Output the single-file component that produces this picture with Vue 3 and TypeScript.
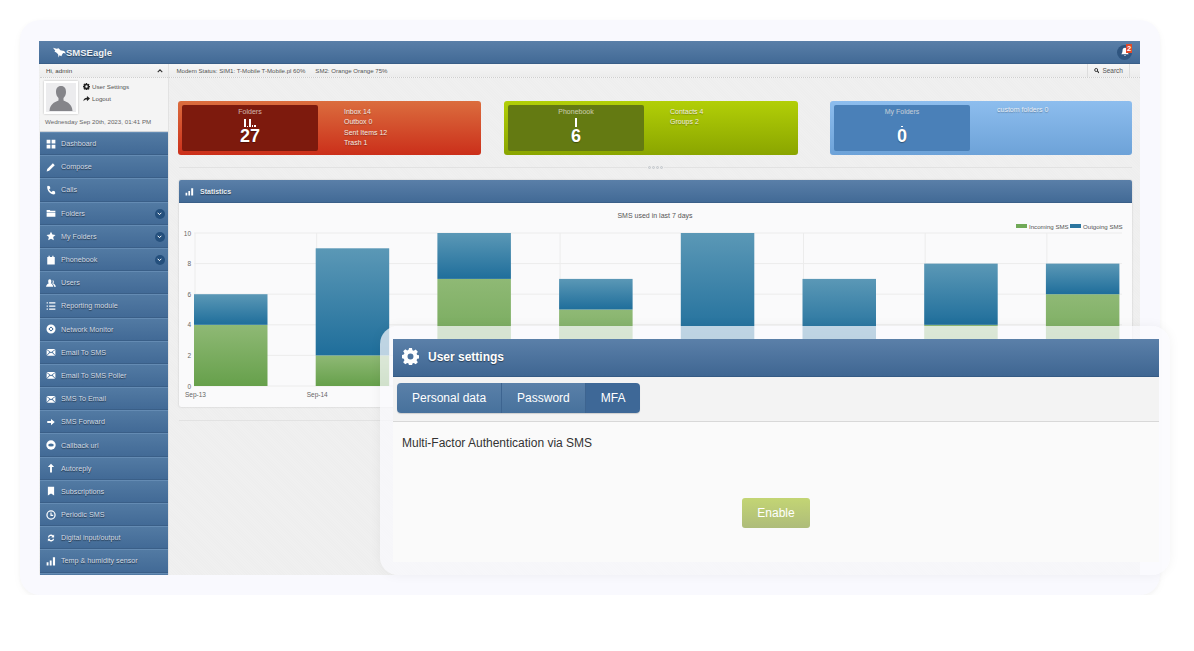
<template>
  <div class="frame">
    <div class="screen">
      <header class="topbar">
        <div class="brand">
          <svg class="eagle" viewBox="0 0 14 11" width="13" height="11">
            <path d="M0 .5 4 1.500 6 1 8 3l4 1 2 2.500-3-.5-1 1.500L9 9.500 7 8.500 6 11 5.500 7.500 3.500 5.500 1.500 4.500 2.500 3.500z" fill="#fff" />
          </svg>
          <span>SMSEagle</span>
        </div>
        <div class="bell">
          <svg viewBox="0 0 12 12" width="10" height="10">
            <path d="M6 1C4 1 3 2.600 3 4.500 3 7 2 8 1.500 8.800h9C10 8 9 7 9 4.500 9 2.600 8 1 6 1zM4.800 9.700a1.300 1.300 0 0 0 2.400 0z" fill="#fff" />
          </svg>
          <b>2</b>
        </div>
      </header>

      <div class="body">
        <aside class="sidebar">
          <div class="hello">
            <span>Hi, admin</span>
            <svg viewBox="0 0 8 5" width="6" height="4"><path d="M1 4 4 1l3 3" fill="none" stroke="#333" stroke-width="1.500" /></svg>
          </div>
          <div class="profile">
            <div class="profile-top">
              <div class="avatar">
                <svg viewBox="0 0 30 30" width="30" height="30">
                  <path d="M15 4c-3.500 0-5 2.500-5 6 0 2.500 1 4.500 2.500 6v2.500C8 20.500 4 22 3.500 29h23c-.5-7-4.500-8.500-9-10.500V16c1.500-1.500 2.500-3.500 2.500-6 0-3.500-1.500-6-5-6z" fill="#85858a" />
                </svg>
              </div>
              <ul class="links">
                <li>
                  <svg viewBox="0 0 16 16" width="7" height="7"><path fill="#222" fill-rule="evenodd" :d="gear" /></svg>
                  User Settings
                </li>
                <li>
                  <svg viewBox="0 0 16 16" width="7" height="7"><path d="M9 2l7 6-7 6v-4C5 10 3 11 1 14c0-5 3-8 8-8z" fill="#222" /></svg>
                  Logout
                </li>
              </ul>
            </div>
            <p class="date">Wednesday Sep 20th, 2023, 01:41 PM</p>
          </div>
          <nav class="menu">
            <div v-for="item in menu" :key="item.label" class="menu-row">
              <svg class="menu-icon" viewBox="0 0 16 16" width="10" height="10" v-html="icons[item.icon]"></svg>
              <span>{{ item.label }}</span>
              <i v-if="item.sub" class="chev">
                <svg viewBox="0 0 8 6" width="5" height="4"><path d="M1 1l3 3 3-3" fill="none" stroke="#fff" stroke-width="1.600" /></svg>
              </i>
            </div>
            <div class="menu-row"></div>
          </nav>
        </aside>

        <main class="main">
          <div class="status">
            <span class="modem">Modem Status: SIM1: T-Mobile T-Mobile.pl 60%</span>
            <span class="modem sim2">SM2: Orange Orange 75%</span>
            <div class="search">
              <svg viewBox="0 0 16 16" width="7" height="7">
                <circle cx="6.500" cy="6.500" r="4.500" fill="none" stroke="#222" stroke-width="2.600" />
                <path d="M10 10l5 5" stroke="#222" stroke-width="3" />
              </svg>
              <span>Search</span>
            </div>
          </div>

          <section class="stats">
            <div v-for="s in stats" :key="s.title" class="stat" :class="s.cls">
              <div class="stat-box">
                <div class="stat-title">{{ s.title }}</div>
                <div class="spark">
                  <i v-for="(h, n) in s.spark" :key="n" :style="{ height: h + 'px' }"></i>
                </div>
                <div class="stat-num">{{ s.value }}</div>
              </div>
              <ul class="stat-list">
                <li v-for="l in s.lines" :key="l">{{ l }}</li>
              </ul>
            </div>
          </section>

          <div class="divider"><span class="grip"><i></i><i></i><i></i><i></i></span></div>

          <section class="panel">
            <div class="panel-head">
              <svg viewBox="0 0 16 16" width="9" height="9" v-html="icons.bars"></svg>
              <span>Statistics</span>
            </div>
            <svg class="chart" viewBox="0 0 953 204" width="953" height="204">
              <defs>
                <linearGradient id="blueFill" x1="0" y1="0" x2="0" y2="1">
                  <stop offset="0" stop-color="#5b98b6" />
                  <stop offset="1" stop-color="#1f6e9b" />
                </linearGradient>
                <linearGradient id="greenFill" x1="0" y1="0" x2="0" y2="1">
                  <stop offset="0" stop-color="#8fb975" />
                  <stop offset="1" stop-color="#66a04b" />
                </linearGradient>
              </defs>
              <text class="chart-title" x="476" y="15" text-anchor="middle">SMS used in last 7 days</text>
              <rect x="837" y="21" width="11" height="4" fill="#70a957" />
              <text class="chart-legend" x="850" y="26">Incoming SMS</text>
              <rect x="891" y="21" width="11" height="4" fill="#2b759f" />
              <text class="chart-legend" x="904" y="26">Outgoing SMS</text>
              <g v-for="t in ticks" :key="t">
                <line x1="15" :x2="943" :y1="yOf(t)" :y2="yOf(t)" stroke="#ececec" />
                <text class="chart-tick" x="12" :y="yOf(t) + 2.500" text-anchor="end">{{ t }}</text>
              </g>
              <line v-for="(b, n) in bars" :key="'v' + n" :x1="xOf(n) + 1" :x2="xOf(n) + 1" y1="30" y2="183" stroke="#ececec" />
              <g v-for="(b, n) in bars" :key="n">
                <rect :x="xOf(n)" :y="yOf(b.inc)" width="73.500" :height="b.inc * unit" fill="url(#greenFill)" />
                <rect :x="xOf(n)" :y="yOf(b.inc + b.out)" width="73.500" :height="b.out * unit" fill="url(#blueFill)" />
              </g>
              <text v-for="(d, n) in days" :key="d" class="chart-tick" :x="xOf(n) - 9" y="194">{{ d }}</text>
            </svg>
          </section>

          <div class="divider plain"></div>
        </main>
      </div>
    </div>

    <div class="popover">
      <div class="settings">
        <div class="settings-head">
          <svg viewBox="0 0 16 16" width="17" height="17">
            <path fill="#fff" fill-rule="evenodd" :d="gear" />
          </svg>
          <span>User settings</span>
        </div>
        <div class="tabs-bar">
          <div class="tabs">
            <button v-for="t in tabs" :key="t" class="tab" :class="{ active: t === activeTab }" @click="activeTab = t">{{ t }}</button>
          </div>
        </div>
        <div class="settings-body">
          <p>Multi-Factor Authentication via SMS</p>
          <button class="enable">Enable</button>
        </div>
      </div>
    </div>
  </div>
</template>

<script setup lang="ts">
import { ref } from 'vue'

const gear = 'M6.600 0h2.800l.4 2.100 1.300.6L12.900 1.500l2 2-1.200 1.800.6 1.300 2.100.4v2.800l-2.100.4-.6 1.300 1.200 1.800-2 2-1.800-1.200-1.300.6-.4 2.100H6.600l-.4-2.100-1.300-.6-1.800 1.200-2-2 1.200-1.800-.6-1.300L-.4 9.400V6.600l2.100-.4.6-1.300L1.100 3.100l2-2 1.800 1.200 1.300-.6zM8 5.200a2.800 2.800 0 1 0 0 5.600 2.800 2.800 0 0 0 0-5.600z'

const icons: Record<string, string> = {
  grid: '<path fill="#fff" d="M1 1h6v6H1zM9 1h6v6H9zM1 9h6v6H1zM9 9h6v6H9z"/>',
  pencil: '<path fill="#fff" d="M11 2l3 3-9 9-4 1 1-4z"/>',
  phone: '<path fill="#fff" d="M3 1l3 1 1 3-2 2c1 2 2 3 4 4l2-2 3 1 1 3-2 2C7 15 1 9 2 2z"/>',
  folder: '<path fill="#fff" d="M1 3h5l1 1.500h8V7H1zM1 8h14v6H1z"/>',
  star: '<path fill="#fff" d="M8 1l2.200 4.700 5 .6-3.700 3.400 1 5L8 12.300l-4.500 2.400 1-5L.8 6.300l5-.6z"/>',
  calendar: '<path fill="#fff" d="M2 3h2V1h2v2h4V1h2v2h2v12H2z"/>',
  users: '<path fill="#fff" d="M6 2c1.800 0 2.600 1.300 2.600 3S8 8 7.500 8.500c1.600.6 3.500 1.500 4 5.500H0c.5-3 2.500-4.800 4.500-5.500C4 8 3.500 6.700 3.500 5S4.200 2 6 2zM10 3c1.600 0 2.400 1.200 2.400 2.800s-.6 2.300-1 2.800c1.700.6 3.800 1.600 4.600 5.400h-3c-.4-2.500-1.600-4.400-3-5.300.6-.9.9-2 .9-3.200 0-.9-.2-1.700-.5-2.400z"/>',
  list: '<path fill="#fff" d="M1 2h2v2H1zM5 2h10v2H5zM1 7h2v2H1zM5 7h10v2H5zM1 12h2v2H1zM5 12h10v2H5z"/>',
  ring: '<circle cx="8" cy="8" r="5.500" fill="none" stroke="#fff" stroke-width="3.500"/><path d="M5 5l6 6M11 5l-6 6" stroke="#fff" stroke-width="1.500"/>',
  mail: '<path fill="#fff" d="M1 3h14L8 8.500zM1 4.500V13l4.500-5zM15 4.500V13l-4.500-5zM6.500 9 8 10l1.500-1 5 5h-13z"/>',
  right: '<path fill="#fff" d="M2 6.500h6V3l6 5-6 5V9.500H2z"/>',
  eye: '<circle cx="8" cy="8" r="7.500" fill="#fff"/><ellipse cx="8" cy="8" rx="4.500" ry="2.500" fill="#46719b"/>',
  up: '<path fill="#fff" d="M8 1l5 5.500H9.500V15h-3V6.500H3z"/>',
  bookmark: '<path fill="#fff" d="M3 1h10v14l-5-3-5 3z"/>',
  clock: '<circle cx="8" cy="8" r="6.500" fill="none" stroke="#fff" stroke-width="2"/><path d="M8 4v4.500h3.500" fill="none" stroke="#fff" stroke-width="1.800"/>',
  sync: '<path fill="#fff" d="M3 7a5 5 0 0 1 8.500-3L13 2.500V7H8.500l1.500-1.500A3 3 0 0 0 5 7zM13 9a5 5 0 0 1-8.500 3L3 13.500V9h4.500L6 10.500A3 3 0 0 0 11 9z"/>',
  bars: '<path fill="#fff" d="M1 10h3v5H1zM6 7h3v8H6zM11 2h3.500v13H11z"/>',
}

const menu = [
  { label: 'Dashboard', icon: 'grid' },
  { label: 'Compose', icon: 'pencil' },
  { label: 'Calls', icon: 'phone' },
  { label: 'Folders', icon: 'folder', sub: true },
  { label: 'My Folders', icon: 'star', sub: true },
  { label: 'Phonebook', icon: 'calendar', sub: true },
  { label: 'Users', icon: 'users' },
  { label: 'Reporting module', icon: 'list' },
  { label: 'Network Monitor', icon: 'ring' },
  { label: 'Email To SMS', icon: 'mail' },
  { label: 'Email To SMS Poller', icon: 'mail' },
  { label: 'SMS To Email', icon: 'mail' },
  { label: 'SMS Forward', icon: 'right' },
  { label: 'Callback url', icon: 'eye' },
  { label: 'Autoreply', icon: 'up' },
  { label: 'Subscriptions', icon: 'bookmark' },
  { label: 'Periodic SMS', icon: 'clock' },
  { label: 'Digital input/output', icon: 'sync' },
  { label: 'Temp & humidity sensor', icon: 'bars' },
]

const stats = [
  { title: 'Folders', value: 27, cls: 'red', spark: [8, 1, 8, 2, 2], lines: ['Inbox 14', 'Outbox 0', 'Sent Items 12', 'Trash 1'] },
  { title: 'Phonebook', value: 6, cls: 'green', spark: [9], lines: ['Contacts 4', 'Groups 2'] },
  { title: 'My Folders', value: 0, cls: 'blue', spark: [1], lines: ['custom folders 0'] },
]

const bars = [
  { inc: 4, out: 2 },
  { inc: 2, out: 7 },
  { inc: 7, out: 3 },
  { inc: 5, out: 2 },
  { inc: 3, out: 7 },
  { inc: 3, out: 4 },
  { inc: 4, out: 4 },
  { inc: 6, out: 2 },
]

const days = ['Sep-13', 'Sep-14']
const ticks = [0, 2, 4, 6, 8, 10]
const unit = 15.3
const yOf = (v: number) => 183 - v * unit
const xOf = (n: number) => 15 + n * 121.7

const tabs = ['Personal data', 'Password', 'MFA']
const activeTab = ref('MFA')
</script>

<style>
html,
body {
  background: #fff;
}
</style>

<style scoped>
.frame {
  position: relative;
  box-sizing: border-box;
  width: 1140px;
  height: 575px;
  margin: 20px 0 0 20px;
  padding: 21px 20px 20px 19px;
  background: #f9f9fe;
  border-radius: 20px;
  box-shadow: 0 2px 4px rgba(0, 0, 0, 0.04), 0 3px 14px rgba(0, 0, 0, 0.02);
  font-family: "Liberation Sans", Arial, sans-serif;
}
.screen {
  display: flex;
  flex-direction: column;
  height: 534px;
  overflow: hidden;
  background-color: #eeeeee;
  background-image: repeating-linear-gradient(45deg, rgba(255, 255, 255, 0.14) 0 1px, transparent 1px 2px);
}
.topbar {
  display: flex;
  align-items: center;
  justify-content: space-between;
  flex: none;
  height: 23px;
  padding: 0 8px 0 14px;
  background: linear-gradient(#5a7fa8, #426a96);
  border-bottom: 1px solid #3a5f88;
  box-sizing: border-box;
}
.brand {
  display: flex;
  align-items: center;
  color: #eef2f6;
  font-size: 9.5px;
  font-weight: bold;
  text-shadow: 0 1px 1px rgba(0, 0, 0, 0.4);
}
.bell {
  position: relative;
  display: flex;
  align-items: center;
  justify-content: center;
  width: 15px;
  height: 15px;
  border-radius: 50%;
  background: #2f5580;
}
.bell b {
  position: absolute;
  top: -1px;
  right: 0;
  width: 6px;
  height: 9px;
  background: #e04a2a;
  color: #fff;
  font-size: 7.5px;
  line-height: 9px;
  text-align: center;
}
.body {
  display: flex;
  flex: 1;
  min-height: 0;
}
.sidebar {
  flex: none;
  width: 127.5px;
  margin-left: 1px;
  background: #f4f4f4;
}
.hello {
  display: flex;
  align-items: center;
  justify-content: space-between;
  height: 14px;
  padding: 0 5px 0 6px;
  box-sizing: border-box;
  border-bottom: 1px dotted #cfcfcf;
  background: linear-gradient(#f6f6f6, #ececec);
  font-size: 6.2px;
  color: #444;
}
.profile {
  height: 54px;
  box-sizing: border-box;
  padding: 3px 0 0 4px;
  border-bottom: 1px solid #cfd3d8;
}
.profile-top {
  display: flex;
}
.avatar {
  display: flex;
  align-items: flex-end;
  justify-content: center;
  width: 34px;
  height: 33px;
  box-sizing: border-box;
  border: 2px solid #fff;
  background: #ececee;
  box-shadow: 0 0 2px rgba(0, 0, 0, 0.25);
}
.links {
  margin: -1px 0 0 5px;
  padding: 0;
  list-style: none;
  font-size: 6.2px;
  color: #555;
}
.links li {
  display: flex;
  align-items: center;
  gap: 2px;
  height: 12px;
}
.date {
  margin: 4px 0 0 1px;
  font-size: 6.2px;
  color: #666;
  white-space: nowrap;
}
.menu-row {
  position: relative;
  display: flex;
  align-items: center;
  height: 23.2px;
  box-sizing: border-box;
  padding-left: 6px;
  background: linear-gradient(#527aa3, #426a96);
  border-top: 1px solid #648bb3;
  border-bottom: 1px solid #3a5f88;
  color: #d3dce6;
  font-size: 7.2px;
  text-shadow: 0 1px 1px rgba(0, 0, 0, 0.55);
}
.menu-icon {
  flex: none;
  margin-right: 5px;
}
.chev {
  position: absolute;
  right: 3px;
  top: 6px;
  display: flex;
  align-items: center;
  justify-content: center;
  width: 10px;
  height: 10px;
  border-radius: 50%;
  background: #25507d;
}
.main {
  flex: 1;
  min-width: 0;
  padding: 0 8px 0 9.5px;
  border-left: 1px solid #e2e2e2;
}
.status {
  display: flex;
  align-items: center;
  height: 14px;
  margin: 0 -8px 0 -9.5px;
  padding-left: 8px;
  background: linear-gradient(#f6f6f6, #ececec);
  border-bottom: 1px dotted #cfcfcf;
  box-sizing: border-box;
  font-size: 6.1px;
  color: #555;
}
.sim2 {
  margin-left: 10px;
}
.search {
  display: flex;
  align-items: center;
  gap: 3px;
  height: 100%;
  margin-left: auto;
  margin-right: 10px;
  padding: 0 6px;
  border-left: 1px solid #ddd;
  border-right: 1px solid #ddd;
  box-sizing: border-box;
  width: 43px;
  font-size: 6.5px;
}
.stats {
  display: flex;
  margin-top: 23px;
}
.stat {
  display: flex;
  height: 54px;
  box-sizing: border-box;
  padding: 4px;
  border-radius: 3px;
  color: #f3ece4;
}
.stat-box {
  display: flex;
  flex-direction: column;
  align-items: center;
  flex: none;
  width: 136px;
  padding-top: 1px;
  box-sizing: border-box;
  border-radius: 2px;
}
.stat-title {
  font-size: 7px;
  line-height: 9px;
  margin-top: 1px;
  opacity: 0.72;
}
.spark {
  display: flex;
  align-items: flex-end;
  gap: 1px;
  height: 9px;
  margin-top: 2px;
}
.spark i {
  display: block;
  width: 1.5px;
  background: #fff;
}
.stat-num {
  font-size: 18px;
  font-weight: bold;
  line-height: 17px;
  margin-top: 1px;
  color: #fff;
  text-shadow: 0 1px 1px rgba(0, 0, 0, 0.35);
}
.stat-list {
  margin: 2px 0 0 26px;
  padding: 0;
  list-style: none;
  font-size: 7px;
  line-height: 10.4px;
  text-shadow: 0 1px 1px rgba(0, 0, 0, 0.3);
}
.red {
  width: 303px;
  background: linear-gradient(#db6d3e, #cb2f1a);
}
.red .stat-box {
  background: #7d1a0d;
}
.green {
  width: 294px;
  margin-left: 23px;
  background: linear-gradient(#b2cf07, #8aa500);
}
.green .stat-box {
  background: #647a12;
}
.blue {
  width: 302px;
  margin-left: 32px;
  background: linear-gradient(#8dbdee, #6da2d8);
}
.blue .stat-box {
  background: #4a80b8;
}
.blue .stat-list {
  margin: 0 0 0 27px;
  color: #e8eef5;
}
.divider {
  position: relative;
  height: 1px;
  margin: 12px 0 0 1px;
  background: #e2e2e2;
}
.grip {
  position: absolute;
  left: 50%;
  top: -1px;
  display: flex;
  gap: 1px;
  margin-left: -9px;
  padding: 0 1px;
  background: #eeeeee;
}
.grip i {
  display: block;
  width: 3px;
  height: 3px;
  border-radius: 50%;
  border: 0.5px solid #c4c8cc;
  box-sizing: border-box;
  background: #dfe2e5;
}
.divider.plain {
  margin-top: 13px;
}
.panel {
  margin: 12px 0 0 1px;
  background: #fafafb;
  border-radius: 2px;
  box-shadow: 0 0 2px rgba(0, 0, 0, 0.2);
  height: 227px;
}
.panel-head {
  display: flex;
  align-items: center;
  gap: 6px;
  height: 23px;
  padding-left: 6px;
  box-sizing: border-box;
  background: linear-gradient(#5a7fa8, #426a96);
  border-bottom: 1px solid #3a5f88;
  border-radius: 2px 2px 0 0;
  color: #e6ecf2;
  font-size: 7px;
  font-weight: bold;
  text-shadow: 0 1px 1px rgba(0, 0, 0, 0.5);
}
.chart {
  display: block;
}
.chart-title {
  font-size: 7px;
  fill: #555;
}
.chart-legend {
  font-size: 6.1px;
  fill: #555;
}
.chart-tick {
  font-size: 6.5px;
  fill: #666;
}
.popover {
  position: absolute;
  left: 360px;
  top: 306px;
  display: flex;
  box-sizing: border-box;
  width: 790px;
  height: 249px;
  padding: 13px 11px 13px 13px;
  border-radius: 18px;
  background: rgba(249, 249, 254, 0.72);
  box-shadow: 0 0 12px rgba(0, 0, 0, 0.05);
}
.settings {
  display: flex;
  flex-direction: column;
  flex: 1;
  background: #fafafa;
}
.settings-head {
  display: flex;
  align-items: center;
  gap: 9px;
  flex: none;
  height: 38px;
  padding: 0 0 2px 9px;
  box-sizing: border-box;
  background: linear-gradient(#5b80a9, #3f6692);
  border-bottom: 1px solid #355a84;
  color: #fff;
  font-size: 12px;
  font-weight: bold;
  text-shadow: 0 1px 1px rgba(0, 0, 0, 0.45);
}
.tabs-bar {
  flex: none;
  height: 45px;
  padding: 6px 0 0 4px;
  box-sizing: border-box;
  background: #f3f3f3;
  border-bottom: 1px solid #d8d8d8;
}
.tabs {
  display: inline-flex;
  overflow: hidden;
  border-radius: 4px;
  box-shadow: 0 1px 1px rgba(0, 0, 0, 0.15);
}
.tab {
  height: 30px;
  padding: 0 15px;
  border: 0;
  border-right: 1px solid #3d6490;
  background: linear-gradient(#5a80a9, #47719c);
  color: #fff;
  font-family: inherit;
  font-size: 12px;
}
.tab.active {
  border-right: 0;
  background: #3e6897;
}
.settings-body {
  flex: 1;
  padding: 14px 9px 0;
  color: #333;
  font-size: 12px;
  text-align: center;
}
.settings-body p {
  margin: 0;
  line-height: 15px;
  text-align: left;
}
.enable {
  width: 68px;
  height: 30px;
  margin-top: 47px;
  border: 0;
  border-radius: 3px;
  background: linear-gradient(#c3d574, #aebc7a);
  color: #fff;
  font-family: inherit;
  font-size: 12px;
}
</style>
